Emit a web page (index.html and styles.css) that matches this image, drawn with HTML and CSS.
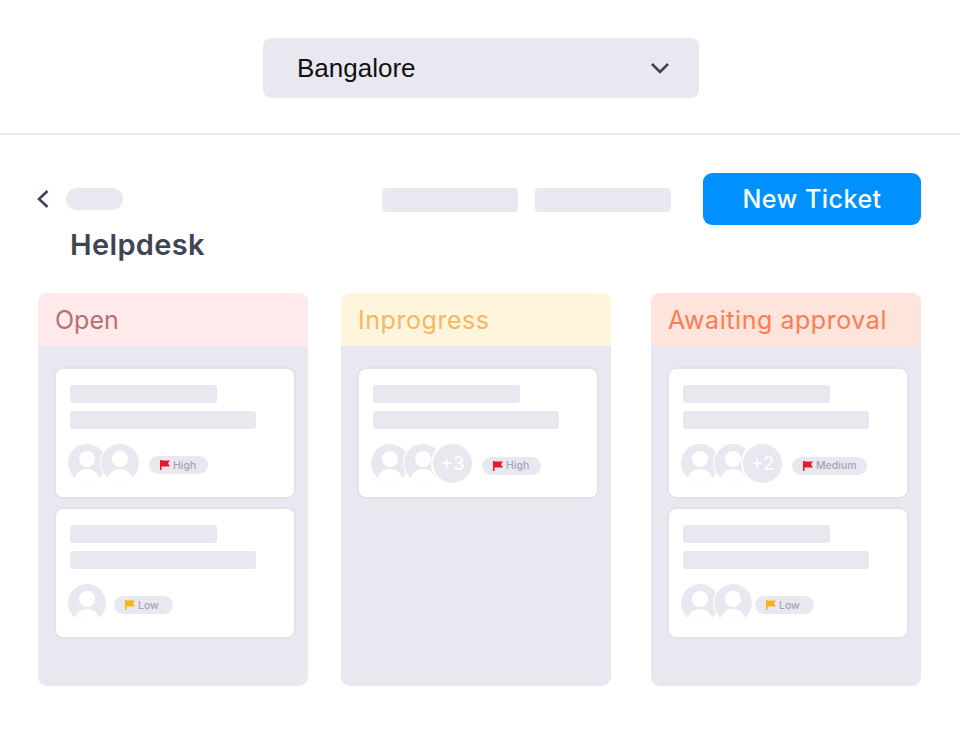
FILE: index.html
```html
<!DOCTYPE html>
<html lang="en">
<head>
    <meta charset="UTF-8">
    <meta name="viewport" content="width=device-width, initial-scale=1.0">
    <title>Helpdesk</title>
    <link rel="stylesheet" href="styles.css">
</head>
<body>
    <svg class="icon-defs" width="0" height="0">
        <symbol id="person" viewBox="0 0 38 38">
            <circle cx="19" cy="15" r="8" fill="#fff"/>
            <path d="M6 38c1-9 6-13 13-13s12 4 13 13z" fill="#fff"/>
        </symbol>
        <symbol id="flag" viewBox="0 0 10 10">
            <path d="M0 0h1.500v10H0zM1.500 .5H10L8 3.200 10 6.500H1.500z"/>
        </symbol>
    </svg>

    <div class="top">
        <div class="select">
            <span>Bangalore</span>
            <svg class="chevron" width="20" height="12" viewBox="0 0 20 12"><path d="M2 2l8 8 8-8" fill="none" stroke="#3f4454" stroke-width="2.600"/></svg>
        </div>
    </div>

    <div class="head">
        <div class="head-left">
            <div class="crumb">
                <svg width="14" height="20" viewBox="0 0 14 20"><path d="M11.500 2L3 10l8.500 8" fill="none" stroke="#3f4454" stroke-width="2.600"/></svg>
                <span class="crumb-pill"></span>
            </div>
            <h1>Helpdesk</h1>
        </div>
        <div class="head-right">
            <span class="tab"></span>
            <span class="tab"></span>
            <button class="new-ticket">New Ticket</button>
        </div>
    </div>

    <div class="board">
        <div class="col">
            <div class="col-title open">Open</div>
            <div class="col-body">
                <div class="card">
                    <div class="line short"></div>
                    <div class="line long"></div>
                    <div class="meta">
                        <div class="avatars">
                            <svg class="avatar"><use href="#person"/></svg>
                            <svg class="avatar"><use href="#person"/></svg>
                        </div>
                        <span class="tag"><svg class="flag red"><use href="#flag"/></svg>High</span>
                    </div>
                </div>
                <div class="card">
                    <div class="line short"></div>
                    <div class="line long"></div>
                    <div class="meta">
                        <div class="avatars">
                            <svg class="avatar"><use href="#person"/></svg>
                        </div>
                        <span class="tag near"><svg class="flag amber"><use href="#flag"/></svg>Low</span>
                    </div>
                </div>
            </div>
        </div>

        <div class="col">
            <div class="col-title progress">Inprogress</div>
            <div class="col-body">
                <div class="card">
                    <div class="line short"></div>
                    <div class="line long"></div>
                    <div class="meta">
                        <div class="avatars">
                            <svg class="avatar"><use href="#person"/></svg>
                            <svg class="avatar"><use href="#person"/></svg>
                            <span class="avatar more">+3</span>
                        </div>
                        <span class="tag"><svg class="flag red"><use href="#flag"/></svg>High</span>
                    </div>
                </div>
            </div>
        </div>

        <div class="col">
            <div class="col-title awaiting">Awaiting approval</div>
            <div class="col-body">
                <div class="card">
                    <div class="line short"></div>
                    <div class="line long"></div>
                    <div class="meta">
                        <div class="avatars">
                            <svg class="avatar"><use href="#person"/></svg>
                            <svg class="avatar"><use href="#person"/></svg>
                            <span class="avatar more">+2</span>
                        </div>
                        <span class="tag"><svg class="flag red"><use href="#flag"/></svg>Medium</span>
                    </div>
                </div>
                <div class="card">
                    <div class="line short"></div>
                    <div class="line long"></div>
                    <div class="meta">
                        <div class="avatars">
                            <svg class="avatar"><use href="#person"/></svg>
                            <svg class="avatar"><use href="#person"/></svg>
                        </div>
                        <span class="tag tight"><svg class="flag amber"><use href="#flag"/></svg>Low</span>
                    </div>
                </div>
            </div>
        </div>
    </div>
</body>
</html>
```

FILE: styles.css
```css
body {
    margin: 0;
    background: #fff;
    font-family: "Inter", "Liberation Sans", sans-serif;
    color: #3f4454;
}
.icon-defs {
    display: block;
    height: 0;
}
.top {
    height: 135px;
    padding-top: 38px;
    box-sizing: border-box;
    border-bottom: 2px solid #eaeaf0;
}
.select {
    width: 436px;
    height: 60px;
    margin-left: 263px;
    padding: 0 29px 0 34px;
    box-sizing: border-box;
    background: #e9e8f0;
    border-radius: 8px;
    display: flex;
    align-items: center;
    justify-content: space-between;
    font-family: "Liberation Sans", sans-serif;
    font-size: 26px;
    color: #111;
}
.head {
    display: flex;
    justify-content: space-between;
    align-items: flex-start;
    margin: 38px 39px 0 36px;
    height: 120px;
}
.crumb {
    display: flex;
    align-items: center;
    gap: 16px;
    height: 52px;
}
.crumb-pill {
    width: 57px;
    height: 22px;
    border-radius: 11px;
    background: #e9e8f0;
}
h1 {
    margin: 0 0 0 34px;
    font-size: 29px;
    line-height: 40px;
    font-weight: 600;
    letter-spacing: .35px;
}
.head-right {
    display: flex;
    align-items: center;
    gap: 17px;
}
.tab {
    width: 136px;
    height: 24px;
    margin-top: 2px;
    border-radius: 4px;
    background: #e9e8f0;
}
.new-ticket {
    width: 218px;
    height: 52px;
    margin-left: 15px;
    border: none;
    border-radius: 9px;
    background: #0090ff;
    color: #fff;
    font-family: "Inter", sans-serif;
    font-size: 25px;
    font-weight: 500;
    letter-spacing: .5px;
}
.board {
    display: flex;
    margin-left: 38px;
}
.col {
    width: 270px;
    height: 393px;
    margin-right: 33px;
    border-radius: 9px;
    background: #e9e8f0;
    overflow: hidden;
}
.col:nth-child(2) {
    margin-right: 40px;
}
.col-title {
    height: 53px;
    padding-left: 17px;
    font-size: 25px;
    line-height: 55px;
    letter-spacing: .55px;
}
.open {
    background: #feeaea;
    color: #b86f74;
    letter-spacing: 0;
}
.progress {
    background: #fff5dc;
    color: #f6b662;
}
.awaiting {
    background: #ffe4dc;
    color: #ff7b52;
}
.col-body {
    padding: 21px 12px 0 16px;
    display: flex;
    flex-direction: column;
    gap: 8px;
}
.card {
    height: 132px;
    box-sizing: border-box;
    padding: 16px 14px 0 14px;
    background: #fff;
    border: 2px solid #e2e2eb;
    border-radius: 9px;
}
.line {
    height: 18px;
    margin-bottom: 8px;
    border-radius: 3px;
    background: #e9e8f0;
}
.line.short {
    width: 147px;
}
.line.long {
    width: 186px;
}
.meta {
    display: flex;
    align-items: center;
    margin-top: 15px;
    margin-left: -2px;
}
.avatars {
    display: flex;
}
.avatar {
    display: block;
    width: 38px;
    height: 38px;
    box-sizing: border-box;
    border-radius: 50%;
    background: #e9e8f0;
    overflow: hidden;
    flex: none;
}
.avatar + .avatar {
    margin-left: -5px;
    box-shadow: 0 0 0 1px #fff;
}
.avatar + .more {
    width: 39px;
    height: 39px;
    margin-left: -9px;
    box-shadow: 0 0 0 2px #fff;
    color: #fff;
    font-size: 19px;
    line-height: 39px;
    text-align: center;
}
.tag {
    display: flex;
    align-items: center;
    gap: 3px;
    min-width: 59px;
    height: 18px;
    box-sizing: border-box;
    margin: 4px 0 0 10px;
    padding: 0 10px 0 11px;
    border-radius: 9px;
    background: #e9e8f0;
    color: #a5a5b2;
    font-size: 10.500px;
    font-weight: 500;
}
.tag.near {
    margin-left: 8px;
}
.tag.tight {
    margin-left: 3px;
}
.flag {
    width: 10px;
    height: 10px;
}
.red {
    fill: #e8182a;
}
.amber {
    fill: #f6b40e;
}
```
